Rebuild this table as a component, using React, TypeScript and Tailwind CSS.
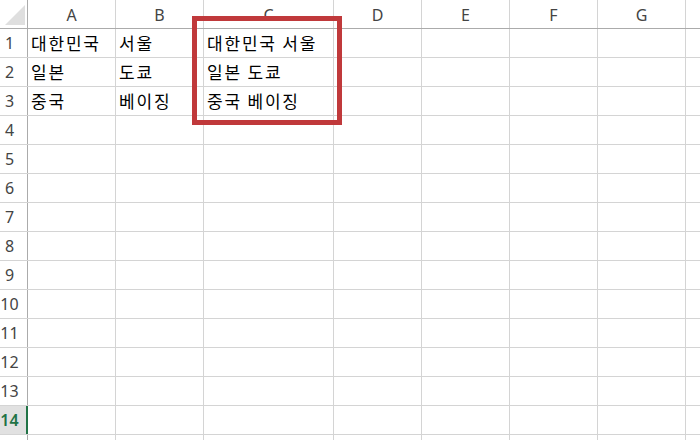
import React from "react";

const cols = [
  { key: "A", w: "w-[88px]" },
  { key: "B", w: "w-[88px]" },
  { key: "C", w: "w-[130px]" },
  { key: "D", w: "w-[88px]" },
  { key: "E", w: "w-[88px]" },
  { key: "F", w: "w-[88px]" },
  { key: "G", w: "w-[88px]" },
  { key: "H", w: "w-[88px]" },
];

const data: Record<number, string[]> = {
  1: ["대한민국", "서울", "대한민국 서울"],
  2: ["일본", "도쿄", "일본 도쿄"],
  3: ["중국", "베이징", "중국 베이징"],
};

const rows = Array.from({ length: 15 }, (_, i) => i + 1);

export default function App() {
  return (
    <div className="relative h-[440px] w-[700px] overflow-hidden bg-white">
      {/* column headers */}
      <div className="flex h-[29px] border-b border-[#ababab]">
        <div className="relative w-[28px] shrink-0 border-r border-[#ababab]">
          <div
            className="absolute left-[5px] top-[5px] h-[20px] w-[20px] bg-[#dfdfdf]"
            style={{ clipPath: "polygon(100% 0, 100% 100%, 0 100%)" }}
          />
        </div>
        {cols.map((c) => (
          <div
            key={c.key}
            className={`${c.w} flex shrink-0 items-center justify-center border-r border-[#d4d4d4] pt-[1px] font-['Noto_Sans',sans-serif] text-[16px] text-[#444444]`}
          >
            {c.key}
          </div>
        ))}
      </div>

      {rows.map((r) => {
        const active = r === 14;
        return (
          <div key={r} className="flex h-[29px] border-b border-[#d4d4d4]">
            <div
              className={
                active
                  ? "flex w-[28px] shrink-0 items-center justify-center border-r-2 border-[#217346] bg-[#e1e1e1] pr-[7px] font-['Noto_Sans',sans-serif] text-[16px] font-semibold text-[#217346]"
                  : "flex w-[28px] shrink-0 items-center justify-center border-r border-[#ababab] pr-[8px] font-['Noto_Sans',sans-serif] text-[16px] text-[#444444]"
              }
            >
              {r}
            </div>
            {cols.map((c, i) => (
              <div
                key={c.key}
                className={`${c.w} flex shrink-0 items-center overflow-hidden whitespace-nowrap border-r border-[#d4d4d4] pl-[3px] font-['Noto_Sans_CJK_KR',sans-serif] text-[17px] tracking-[1.8px] text-black`}
              >
                {data[r]?.[i] ?? ""}
              </div>
            ))}
          </div>
        );
      })}

      {/* highlight box */}
      <div className="absolute left-[192px] top-[16px] h-[109px] w-[150px] border-[5px] border-[#c0393b]" />
    </div>
  );
}
